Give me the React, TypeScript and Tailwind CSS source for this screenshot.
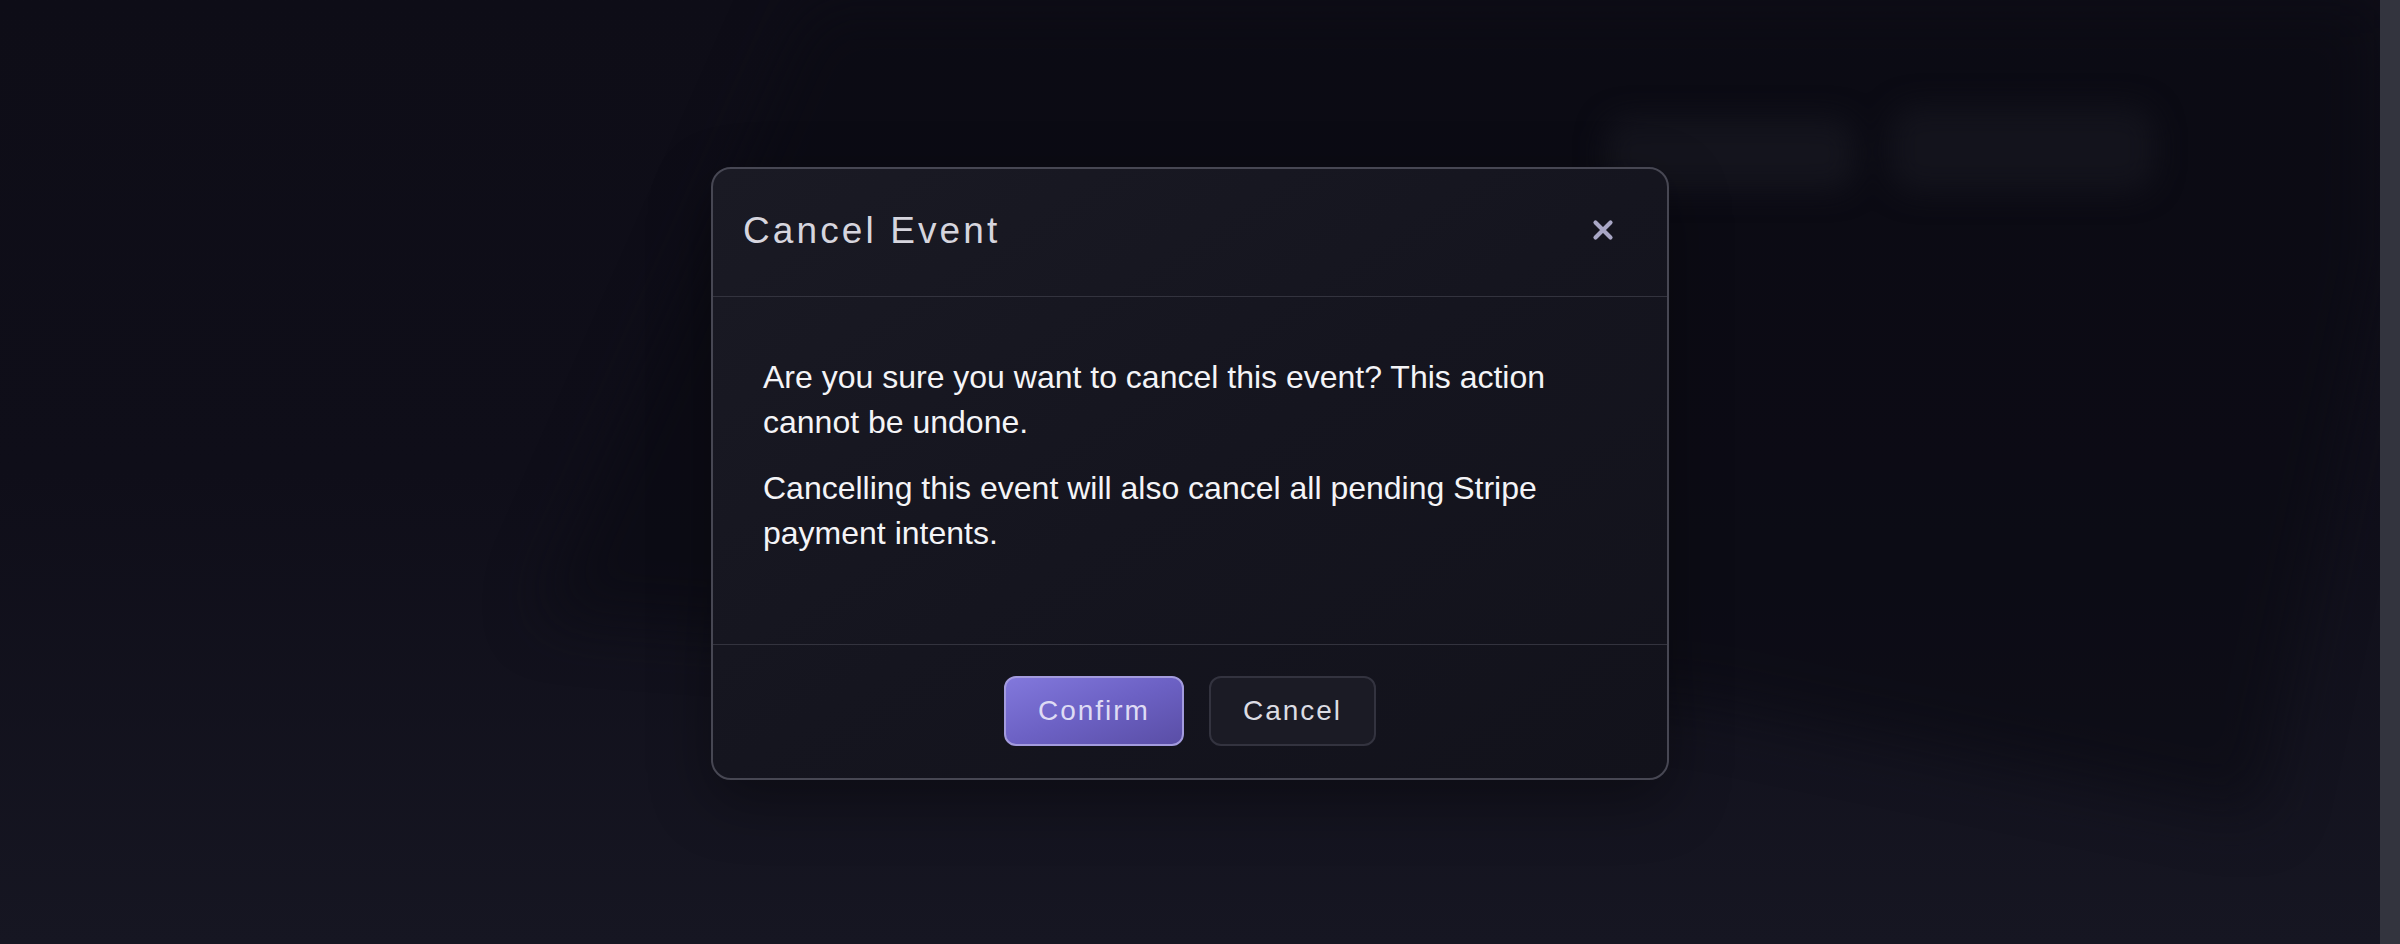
import { useState } from "react";

function CloseIcon() {
  return (
    <svg width="24" height="24" viewBox="0 0 24 24" fill="none">
      <path
        d="M4.5 4.5L19.5 19.5M19.5 4.5L4.5 19.5"
        stroke="currentColor"
        strokeWidth="4.2"
        strokeLinecap="round"
      />
    </svg>
  );
}

export default function App() {
  const [open, setOpen] = useState(true);

  return (
    <div className="flex h-[944px] w-full overflow-hidden font-['Liberation_Sans',Arial,sans-serif]">
      {/* Page behind the dialog */}
      <div className="relative flex-1 overflow-hidden bg-linear-to-b from-[#0e0d17] via-[#0f0e19] to-[#161622]">
        {/* blurred page content */}
        <div className="pointer-events-none absolute inset-0 blur-[30px]">
          <div className="absolute inset-0 bg-[#0a0a12] opacity-60 [clip-path:polygon(820px_-20px,2440px_-20px,2260px_815px,1700px_700px,540px_615px)]" />
        </div>
        <div className="pointer-events-none absolute inset-0 blur-[14px]">
          <div className="absolute left-[1605px] top-[118px] h-[72px] w-[250px] rounded-[24px] bg-[#14141d]" />
          <div className="absolute left-[1890px] top-[106px] h-[86px] w-[265px] rounded-[28px] bg-[#13131c]" />
        </div>

        {/* Dialog overlay */}
        {open && (
          <div className="absolute inset-0 flex items-center justify-center pt-[2px]">
            <div className="w-[958px] overflow-hidden rounded-[20px] border-2 border-[#474753] bg-linear-to-br from-[#1a1a24] via-[#15151f] to-[#12121b] shadow-[0_20px_60px_rgba(0,0,0,0.35)]">
              {/* Header */}
              <div className="flex h-[128px] items-center justify-between border-b border-[#33333e] pb-[4px] pl-[30px] pr-[40px]">
                <h2 className="text-[37px] leading-none font-normal tracking-[3.1px] text-[#d6d5de]">
                  Cancel Event
                </h2>
                <button
                  onClick={() => setOpen(false)}
                  className="flex h-[48px] w-[48px] items-center justify-center text-[#a9a7c6]"
                >
                  <CloseIcon />
                </button>
              </div>

              {/* Body */}
              <div className="border-b border-[#33333e] px-[50px] pt-[58px] pb-[88px] text-[32px] leading-[45px] text-[#f4f4f7]">
                <p className="mb-[21px]">
                  Are you sure you want to cancel this event? This action cannot be undone.
                </p>
                <p>Cancelling this event will also cancel all pending Stripe payment intents.</p>
              </div>

              {/* Footer */}
              <div className="flex h-[133px] items-center justify-center gap-[25px]">
                <button className="flex h-[70px] items-center rounded-[12px] border-2 border-[#a39bde] bg-linear-to-br from-[#8278dc] via-[#6c61c4] to-[#5a4ea6] px-[32px] text-[28px] tracking-[2px] text-[#dedbf4]">
                  Confirm
                </button>
                <button
                  onClick={() => setOpen(false)}
                  className="flex h-[70px] items-center rounded-[12px] border-2 border-[#33333f] bg-[#1b1b25] px-[32px] text-[28px] tracking-[2px] text-[#dcdce3]"
                >
                  Cancel
                </button>
              </div>
            </div>
          </div>
        )}
      </div>

      {/* Scrollbar track */}
      <div className="h-full w-[20px] bg-[#33343e]" />
    </div>
  );
}
